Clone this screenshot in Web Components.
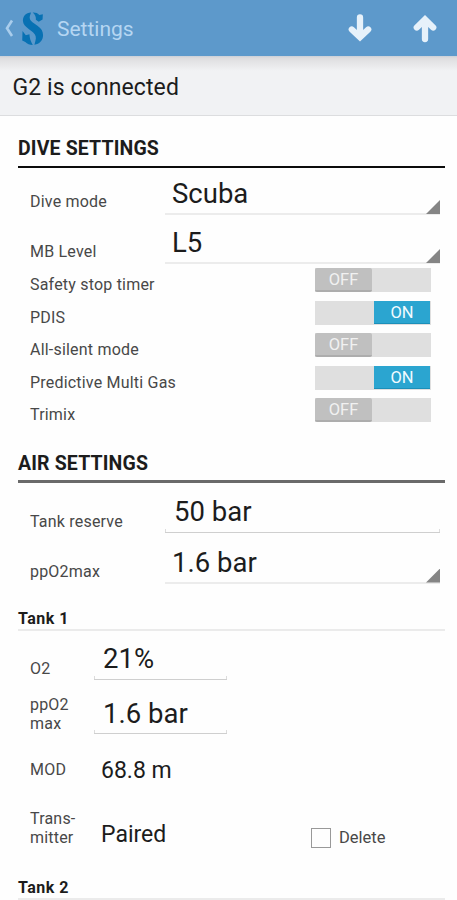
<!DOCTYPE html>
<html lang="en">
<head>
<meta charset="utf-8">
<title>Settings</title>
<style>
  html, body {
    margin: 0;
    height: 900px;
    overflow: hidden;
    background: #fefefe;
    color: #1c1c1c;
    font-family: Roboto, "Liberation Sans", sans-serif;
  }
</style>
</head>
<body>
<settings-page></settings-page>

<script>
/**
 * Creates a template from markup.
 *
 * @param {string} html - The markup.
 * @returns {HTMLTemplateElement} The template.
 */
const createTemplate = (html) => {
  const template = document.createElement('template')
  template.innerHTML = html
  return template
}

/**
 * Base class which clones the template of the subclass.
 */
class BaseElement extends HTMLElement {
  constructor () {
    super()
    this.attachShadow({ mode: 'open' })
      .appendChild(this.constructor.template.content.cloneNode(true))
  }
}

// The blue bar with back arrow, logo, title and transfer arrows.
customElements.define('app-bar',
  class extends BaseElement {
    static template = createTemplate(`
      <style>
        :host {
          display: flex;
          align-items: center;
          box-sizing: border-box;
          height: 56px;
          padding: 0 18px 0 4px;
          background: #5d99cb;
        }
        svg { display: block; flex: none; }
        .back { margin-right: 7px; }
        .logo { margin-right: 13px; }
        .title {
          flex: 1;
          padding-top: 2px;
          font-size: 21px;
          line-height: 26px;
          color: #b5d6f2;
        }
        .down { margin-right: 37px; }
      </style>
      <svg class="back" width="10" height="20" viewBox="0 0 10 20">
        <path d="M8 2.500 3 10.300l5 7.700" fill="none" stroke="#a9cdec" stroke-width="2.600"/>
      </svg>
      <svg class="logo" width="23" height="35" viewBox="0 0 24 36">
        <path fill="#0871b3" d="M10.500 1.200C5 1.500 1.800 5 2 10 2.200 13.800 4.500 16 8 18.500L12.500 21.800C15.500 24.200 16.200 27.500 15 31L14 35C19.500 34 23 30.200 23 25 23 21 21.200 18.300 17.500 15.500L12 11.600C9.300 9.600 8.600 7.300 9.300 4.800Z"/>
        <path fill="#0871b3" d="M12.200 1.400C15 1.200 17.500 2 19.200 4L22.800 3.200 22.500 8.500 18.500 11 15.500 8.800C15.900 6 14.600 3.500 12.200 1.400Z"/>
        <path fill="#0871b3" d="M1.600 20.500 5 25 8.800 24C9 28 10 31.500 12.300 35.200 9 35.200 6.500 34.200 4.500 32.200L1.300 30.600Z"/>
      </svg>
      <div class="title"><slot></slot></div>
      <svg class="down" width="28" height="30" viewBox="0 0 28 30">
        <path d="M14 4.500V22M5.800 16.500 14 24.200 22.200 16.500" fill="none" stroke="#e6f1fa" stroke-width="6.300" stroke-linecap="round"/>
      </svg>
      <svg width="28" height="30" viewBox="0 0 28 30">
        <path d="M14 26V8M5.800 14.500 14 6.500 22.200 14.500" fill="none" stroke="#e6f1fa" stroke-width="6.300" stroke-linecap="round"/>
      </svg>
    `)
  }
)

// The connection status under the app bar.
customElements.define('status-bar',
  class extends BaseElement {
    static template = createTemplate(`
      <style>
        :host {
          display: block;
          box-sizing: border-box;
          height: 60px;
          padding: 18px 12.500px 0;
          border-bottom: 1px solid #dcdddf;
          background: linear-gradient(#c9cfd8 0, #dedcde 2px, #e2e2e4 5px, #f1f2f4 15px);
          font-size: 23px;
          line-height: 28px;
          letter-spacing: 0.1px;
        }
      </style>
      <slot></slot>
    `)
  }
)

customElements.define('section-heading',
  class extends BaseElement {
    static template = createTemplate(`
      <style>
        :host {
          display: flex;
          align-items: flex-end;
          box-sizing: border-box;
          height: var(--height, 52px);
          margin: 0 12px 0 18px;
          padding-bottom: var(--bottom, 5px);
          border-bottom: var(--thickness, 2px) solid var(--rule, #0c0c0c);
          font-size: 19.500px;
          font-weight: 700;
          line-height: 24px;
          letter-spacing: 0.14px;
        }
        :host([small]) {
          padding-bottom: 0;
          border-bottom-color: #ebebeb;
          font-size: 16px;
          line-height: 20px;
          letter-spacing: 0.5px;
        }
      </style>
      <slot></slot>
    `)
  }
)

// A label with an underlined value. The "menu" attribute adds the corner.
customElements.define('setting-field',
  class extends BaseElement {
    static template = createTemplate(`
      <style>
        :host {
          display: grid;
          grid-template-columns: var(--label-width, 135px) var(--value-width, 275px);
          align-items: end;
          box-sizing: border-box;
          height: var(--height, 50px);
          padding-left: 30px;
        }
        .label {
          padding-bottom: var(--label-bottom, 4px);
          font-size: 16px;
          line-height: 19px;
          color: #484848;
          letter-spacing: 0.2px;
        }
        .value {
          display: flex;
          justify-content: space-between;
          align-items: flex-end;
          border-bottom: 2px solid #ececec;
          font-size: 27.500px;
          line-height: 32px;
        }
        .text {
          padding: 0 0 var(--value-bottom, 3px) var(--indent, 7px);
        }
        .corner {
          display: none;
          width: 14px;
          height: 14px;
          margin-bottom: -1px;
          background: #858585;
          clip-path: polygon(100% 0, 100% 100%, 0 100%);
        }
        :host([menu]) .corner { display: block; }
        :host([edit]) .value {
          border-bottom-width: 1px;
          border-color: #cfcfcf;
          background:
            linear-gradient(#dcdcdc, #dcdcdc) left bottom / 1px 3px no-repeat,
            linear-gradient(#dcdcdc, #dcdcdc) right bottom / 1px 3px no-repeat;
        }
        :host([plain]) .value {
          border-bottom: 0;
          font-size: 23px;
          line-height: 28px;
        }
      </style>
      <div class="label"><slot name="label"></slot></div>
      <div class="value">
        <span class="text"><slot></slot></span>
        <span class="corner"></span>
      </div>
      <slot name="extra"></slot>
    `)
  }
)

customElements.define('toggle-row',
  class extends BaseElement {
    static template = createTemplate(`
      <style>
        :host {
          display: flex;
          justify-content: space-between;
          box-sizing: border-box;
          height: 32.500px;
          padding: 4px 26px 0 30px;
        }
        .label {
          padding-top: 7px;
          font-size: 16px;
          line-height: 19px;
          color: #484848;
          letter-spacing: 0.2px;
        }
        .track {
          display: flex;
          width: 116px;
          height: 24px;
          background: #dfdfdf;
        }
        .thumb {
          box-sizing: border-box;
          width: 57px;
          height: 24px;
          border-bottom: 2px solid #adadad;
          border-radius: 2px;
          background: #c0c0c0;
          color: #f1f1f1;
          font-size: 16.500px;
          line-height: 23px;
          text-align: center;
        }
        :host([on]) .track { justify-content: flex-end; }
        :host([on]) .thumb {
          width: 56px;
          height: 23px;
          margin-right: 1px;
          border-bottom: 1px solid #1c8fb9;
          border-radius: 0;
          background: #2ba5d0;
          color: #f2fbff;
        }
      </style>
      <span class="label"><slot></slot></span>
      <span class="track"><span class="thumb"></span></span>
    `)

    /**
     * Called after the element is inserted into the DOM.
     */
    connectedCallback () {
      this.shadowRoot.querySelector('.thumb').textContent =
        this.hasAttribute('on') ? 'ON' : 'OFF'
    }
  }
)

customElements.define('check-box',
  class extends BaseElement {
    static template = createTemplate(`
      <style>
        :host {
          display: flex;
          align-items: center;
          gap: 8px;
          font-size: 16.500px;
          line-height: 20px;
          color: #484848;
        }
        .box {
          box-sizing: border-box;
          width: 20px;
          height: 20px;
          border: 1px solid #999;
        }
      </style>
      <span class="box"></span>
      <slot></slot>
    `)
  }
)

customElements.define('settings-page',
  class extends BaseElement {
    static template = createTemplate(`
      <style>
        :host { display: block; }
        .air-heading {
          --height: 56px;
          --rule: #6a6a6a;
          --thickness: 3px;
          --bottom: 4px;
        }
        .tank { --label-width: 64px; --value-width: 133px; --indent: 9px; }
        .transmitter { grid-template-columns: 64px 217px auto; }
        check-box { padding-bottom: 1px; }
      </style>
      <app-bar>Settings</app-bar>
      <status-bar>G2 is connected</status-bar>

      <section-heading>DIVE SETTINGS</section-heading>
      <setting-field menu style="--height: 47px"><span slot="label">Dive mode</span>Scuba</setting-field>
      <setting-field menu style="--height: 49px; --label-bottom: 3px"><span slot="label">MB Level</span>L5</setting-field>
      <toggle-row>Safety stop timer</toggle-row>
      <toggle-row on>PDIS</toggle-row>
      <toggle-row>All-silent mode</toggle-row>
      <toggle-row on>Predictive Multi Gas</toggle-row>
      <toggle-row>Trimix</toggle-row>

      <section-heading class="air-heading">AIR SETTINGS</section-heading>
      <setting-field edit style="--height: 50px; --indent: 9px; --value-bottom: 4px; --label-bottom: 2px"><span slot="label">Tank reserve</span>50 bar</setting-field>
      <setting-field menu style="--height: 51px; --label-bottom: 3px"><span slot="label">ppO2max</span>1.6 bar</setting-field>

      <section-heading small style="--height: 47px">Tank 1</section-heading>
      <setting-field edit class="tank" style="--height: 49px; --value-bottom: 4px; --label-bottom: 2px"><span slot="label">O2</span>21%</setting-field>
      <setting-field edit class="tank" style="--height: 54px; --label-bottom: 1px"><span slot="label">ppO2<br>max</span>1.6 bar</setting-field>
      <setting-field plain class="tank" style="--height: 51px; --indent: 7px; --value-bottom: 0px; --label-bottom: 6px"><span slot="label">MOD</span>68.8 m</setting-field>
      <setting-field plain class="tank transmitter" style="--height: 64px; --indent: 7px; --value-bottom: 0px; --label-bottom: 2px"><span slot="label">Trans-<br>mitter</span>Paired<check-box slot="extra">Delete</check-box></setting-field>
      <section-heading small style="--height: 51px">Tank 2</section-heading>
    `)
  }
)
</script>
</body>
</html>
